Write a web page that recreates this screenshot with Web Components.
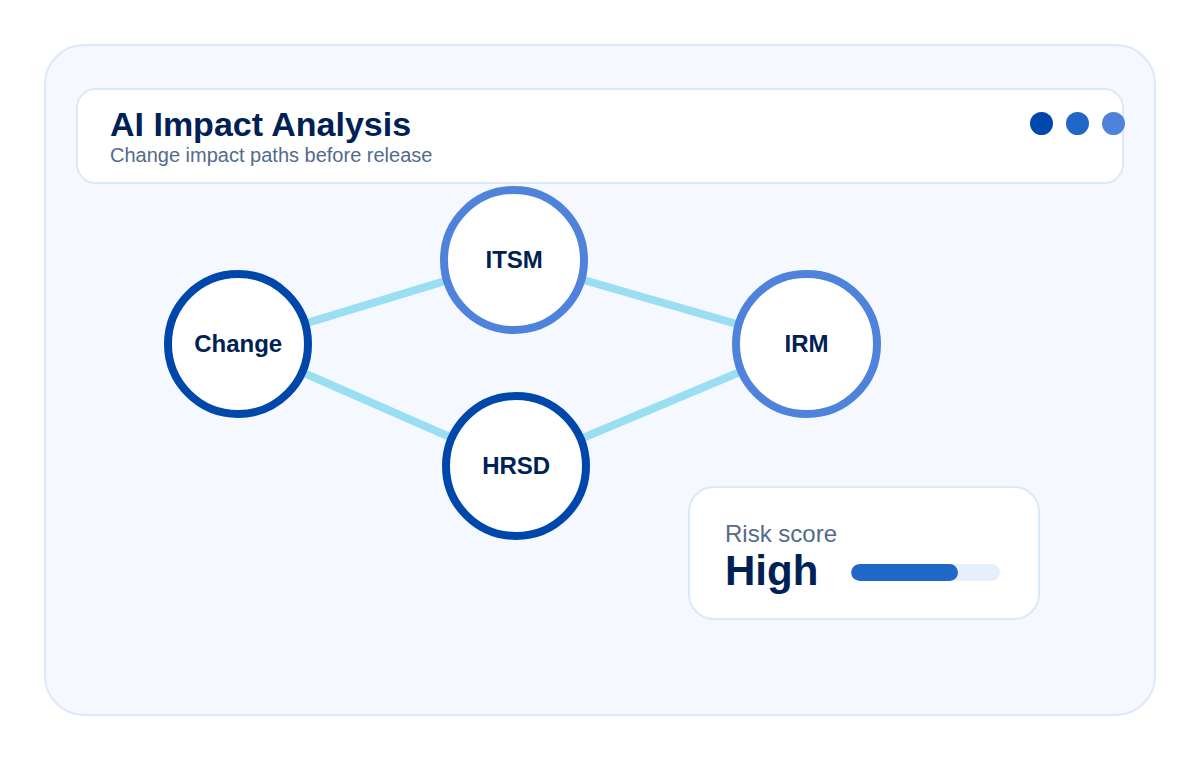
<!DOCTYPE html>
<html lang="en">
<head>
<meta charset="utf-8">
<title>AI Impact Analysis</title>
<style>
html,body{margin:0;padding:0;background:#fff}
body{font-family:"Liberation Sans",Arial,sans-serif;color:#002155}
</style>
</head>
<body>
<template id="t-app">
<style>
:host{display:block;width:1200px;height:760px;box-sizing:border-box;padding:44px 44px 44px 44px}
.panel{box-sizing:border-box;width:1112px;height:672px;background:#f5f8ff;border:2px solid #dce9f8;border-radius:40px;padding:42px 30px 0 30px;display:flex;flex-direction:column}
</style>
<div class="panel"><slot></slot></div>
</template>

<template id="t-header">
<style>
:host{display:flex;box-sizing:border-box;height:96px;background:#fff;border:2px solid #dce9f8;border-radius:20px;padding:0 0 0 32px;justify-content:space-between;align-items:flex-start;flex:none}
.t{display:flex;flex-direction:column;padding-top:15px}
h1{margin:0;font:700 34px/38px "Liberation Sans",Arial,sans-serif;color:#002155}
p{margin:0;font:400 20px/24px "Liberation Sans",Arial,sans-serif;color:#526b8a}
.dots{display:flex;gap:13px;margin-top:21.5px;margin-right:-2.5px}
</style>
<div class="t"><h1><slot name="title"></slot></h1><p><slot name="sub"></slot></p></div>
<div class="dots"><slot name="dots"></slot></div>
</template>

<template id="t-dot">
<style>:host{display:block;width:23px;height:23px;border-radius:50%;background:var(--c)}</style>
</template>

<template id="t-stage">
<style>
:host{display:flex;position:relative;flex:1;justify-content:flex-end;align-items:flex-start;padding:302px 84px 0 0}
svg{position:absolute;left:0;top:0;width:1048px;height:530px;overflow:visible}
line{stroke:#9adef2;stroke-width:8}
</style>
<svg viewBox="76 186 1048 530" aria-hidden="true">
<line x1="238" y1="346" x2="514" y2="262"/>
<line x1="514" y1="262" x2="806.5" y2="346"/>
<line x1="238" y1="346" x2="516" y2="468"/>
<line x1="516" y1="468" x2="806.5" y2="346"/>
</svg>
<slot></slot>
</template>

<template id="t-node">
<style>
:host{position:absolute;box-sizing:border-box;width:148.4px;height:148.4px;border-radius:50%;background:#fff;border:8px solid var(--c);display:flex;align-items:center;justify-content:center;font:700 24px/28px "Liberation Sans",Arial,sans-serif;color:#002155;left:var(--x);top:var(--y)}
</style>
<slot></slot>
</template>

<template id="t-risk">
<style>
:host{display:block;box-sizing:border-box;width:352px;height:134px;background:#fff;border:2px solid #dce9f8;border-radius:26px;padding:32px 38px 0 35px;flex:none}
.l{font:400 24px/28px "Liberation Sans",Arial,sans-serif;color:#526b8a}
.r{display:flex;align-items:center;gap:33px;margin-top:-1px}
.v{font:700 42px/48px "Liberation Sans",Arial,sans-serif;color:#002155}
</style>
<div class="l"><slot name="label"></slot></div>
<div class="r"><div class="v"><slot name="value"></slot></div><slot name="bar"></slot></div>
</template>

<template id="t-bar">
<style>
:host{display:block;width:151px;height:17px;border-radius:8.5px;background:#e6effc;overflow:hidden;margin-top:3px}
i{display:block;width:107px;height:100%;border-radius:8.5px;background:#2068c8}
</style>
<i></i>
</template>

<impact-app>
  <impact-header>
    <span slot="title">AI Impact Analysis</span>
    <span slot="sub">Change impact paths before release</span>
    <impact-dot slot="dots" style="--c:#0047ab"></impact-dot>
    <impact-dot slot="dots" style="--c:#2068c8"></impact-dot>
    <impact-dot slot="dots" style="--c:#4f83db"></impact-dot>
  </impact-header>
  <impact-stage>
    <impact-node style="--c:#0047ab;--x:88px;--y:86px">Change</impact-node>
    <impact-node style="--c:#4f83db;--x:364px;--y:2px">ITSM</impact-node>
    <impact-node style="--c:#4f83db;--x:656.3px;--y:86px">IRM</impact-node>
    <impact-node style="--c:#0047ab;--x:366px;--y:208px">HRSD</impact-node>
    <impact-risk>
      <span slot="label">Risk score</span>
      <span slot="value">High</span>
      <impact-bar slot="bar"></impact-bar>
    </impact-risk>
  </impact-stage>
</impact-app>

<script>
const reg=(name,id)=>customElements.define(name,class extends HTMLElement{
  constructor(){super();this.attachShadow({mode:"open"}).appendChild(document.getElementById(id).content.cloneNode(true));}
});
reg("impact-app","t-app");
reg("impact-header","t-header");
reg("impact-dot","t-dot");
reg("impact-stage","t-stage");
reg("impact-node","t-node");
reg("impact-risk","t-risk");
reg("impact-bar","t-bar");
</script>
</body>
</html>
